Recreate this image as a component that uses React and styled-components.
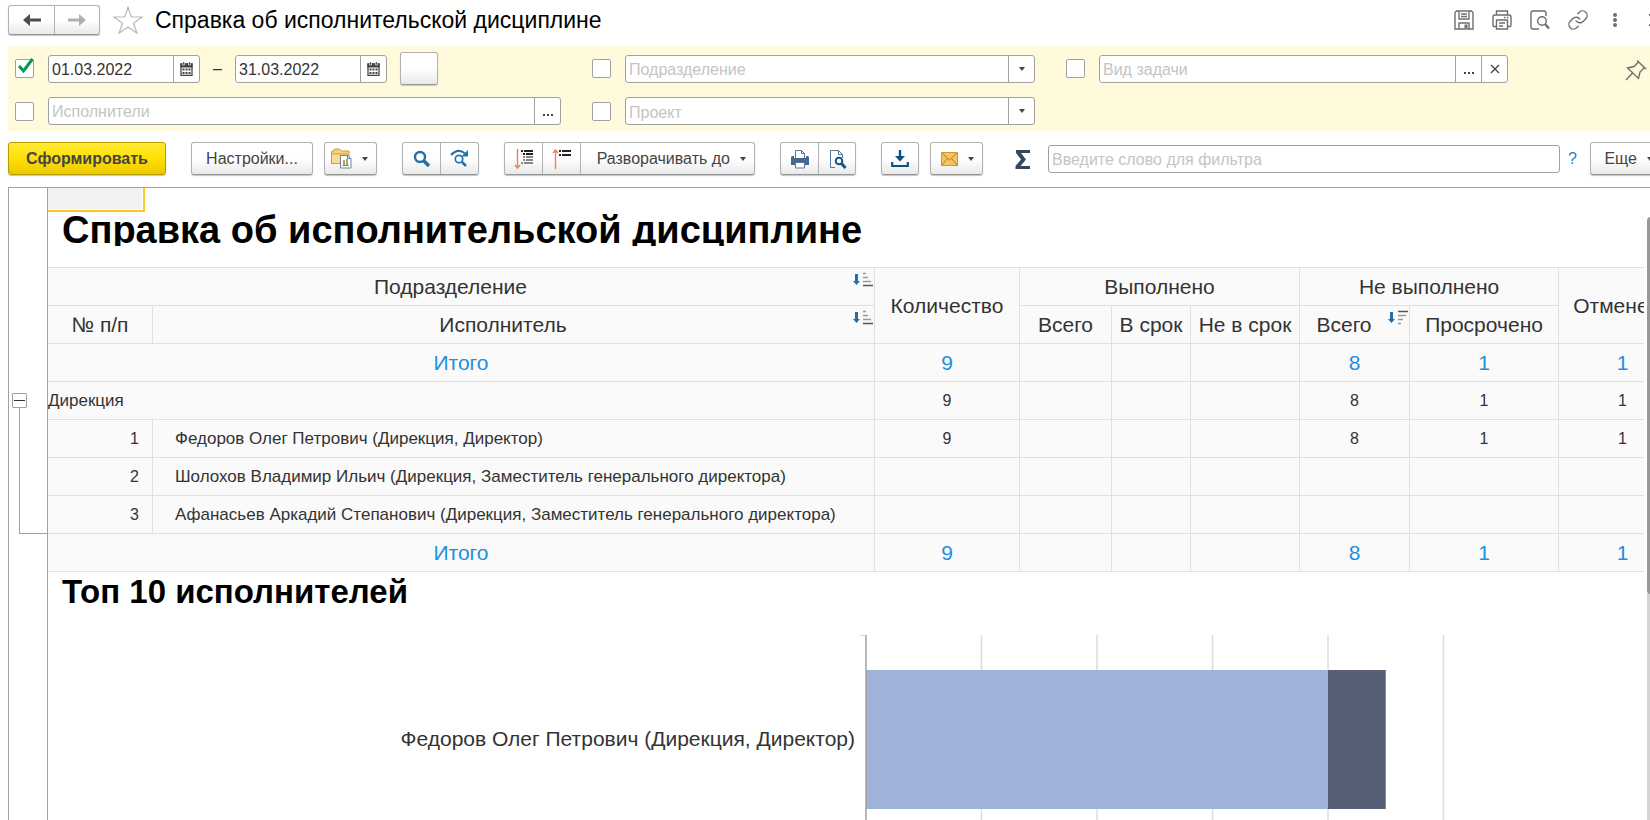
import React, { useState } from "react";
import styled, { createGlobalStyle } from "styled-components";
import { Link } from "lucide-react";

const GlobalStyle = createGlobalStyle`
  * {
    box-sizing: border-box;
  }
  body {
    margin: 0;
    background: #fff;
    overflow: hidden;
  }
  body, button, input, select {
    font-family: "Liberation Sans", Arial, sans-serif;
    font-size: 16px;
    color: #333;
  }
`;

const Viewport = styled.div`
  height: 100vh;
  overflow: hidden;
`;

// the form is a little wider than the window, its right edge is cut off
const Form = styled.div`
  display: flex;
  flex-direction: column;
  height: 100%;
  margin-right: -12px;
  padding-left: 8px;
`;

/* ---------- title bar ---------- */

const TitleBar = styled.header`
  display: flex;
  align-items: center;
  flex: none;
  height: 46px;
  padding-bottom: 6px;
`;

const Title = styled.h1`
  flex: 1;
  margin: 0;
  font-size: 23px;
  font-weight: normal;
  line-height: 28px;
  color: #000;
`;

const IconButton = styled.button`
  display: flex;
  align-items: center;
  justify-content: ${(p) => p.$align || "center"};
  flex: none;
  width: ${(p) => p.$width || 38}px;
  height: 28px;
  padding: 0;
  border: 0;
  background: none;
  cursor: pointer;
`;

const StarButton = styled(IconButton)`
  margin: 0 8px 0 9px;
`;

/* ---------- buttons ---------- */

const Group = styled.div`
  display: flex;
  flex: none;
  height: ${(p) => p.$height || 33}px;
  margin-right: ${(p) => p.$gap || 0}px;
  border: 1px solid #b2b2b2;
  border-bottom-color: #969696;
  border-radius: 3px;
  background: linear-gradient(#fff 50%, #e9e9e9);
  box-shadow: 0 1px 1px #c4c4c4;
`;

const Button = styled.button`
  display: flex;
  align-items: center;
  justify-content: center;
  gap: 10px;
  width: ${(p) => p.$width}px;
  padding: 0;
  border: 0;
  background: none;
  color: #444;
  white-space: nowrap;
  cursor: pointer;

  & + & {
    border-left: 1px solid #b2b2b2;
  }
`;

const MenuButton = styled(Button)`
  justify-content: flex-end;
  padding-right: 8px;
`;

const RunButton = styled(Button)`
  flex: none;
  height: 33px;
  margin-right: 25px;
  border: 1px solid #b59d00;
  border-radius: 3px;
  background: linear-gradient(#ffea38, #ffe000 50%, #ebc800);
  box-shadow: 0 1px 1px #c4c4c4;
  font-weight: bold;
`;

/* ---------- filters ---------- */

const FilterPanel = styled.section`
  display: flex;
  flex: none;
  height: 85px;
  padding: 6px 15px 0 7px;
  background: #fffadb;
`;

const FilterGrid = styled.div`
  display: grid;
  flex: 1;
  grid-template-columns: 546fr 443fr 442fr;
  grid-template-rows: 33px 28px;
  gap: 12px 31px;
  align-content: start;
`;

const FilterCell = styled.div`
  display: flex;
  align-items: center;
  min-width: 0;
`;

const CheckLabel = styled.label`
  position: relative;
  flex: none;
  width: 19px;
  height: 19px;
  margin-right: 14px;

  svg {
    position: absolute;
    left: 2px;
    top: -2px;
    pointer-events: none;
  }
`;

const CheckBox = styled.input`
  display: block;
  appearance: none;
  width: 19px;
  height: 19px;
  margin: 0;
  border: 1px solid #a0a0a0;
  border-radius: 2px;
  background: #fff;
`;

const Field = styled.div`
  display: flex;
  flex: ${(p) => (p.$width ? "none" : 1)};
  width: ${(p) => (p.$width ? `${p.$width}px` : "auto")};
  min-width: 0;
  height: 28px;
  border: 1px solid #a0a0a0;
  border-radius: 3px;
  background: #fff;
  overflow: hidden;
`;

const TextInput = styled.input`
  flex: 1;
  min-width: 0;
  padding: 2px 3px 0;
  border: 0;
  outline: 0;
  background: none;

  &::placeholder {
    color: #c4c4c4;
  }
`;

const FieldButton = styled.button`
  display: flex;
  align-items: center;
  justify-content: center;
  flex: none;
  width: 26px;
  padding: 0;
  border: 0;
  border-left: 1px solid #a0a0a0;
  background: none;
`;

const SelectField = styled(Field)`
  display: grid;

  > * {
    grid-area: 1 / 1;
  }
`;

const Select = styled.select`
  appearance: none;
  padding: 2px 30px 0 3px;
  border: 0;
  outline: 0;
  background: none;
  color: #c4c4c4;
`;

const SelectArrow = styled.span`
  display: flex;
  align-items: center;
  justify-content: center;
  justify-self: end;
  width: 26px;
  border-left: 1px solid #a0a0a0;
  pointer-events: none;
`;

const Dash = styled.span`
  width: 35px;
  text-align: center;
`;

const PeriodGroup = styled(Group)`
  margin-left: 13px;
`;

const PinButton = styled(IconButton)`
  margin-left: 117px;
  margin-top: 4px;
`;

/* ---------- toolbar ---------- */

const Toolbar = styled.div`
  display: flex;
  align-items: flex-start;
  flex: none;
  height: 56px;
  padding-top: 11px;
`;

const FilterField = styled(Field)`
  align-self: flex-start;
  margin-top: 3px;
`;

const HelpLink = styled.a`
  width: 30px;
  padding-left: 8px;
  line-height: 33px;
  color: #1a7fc4;
  text-decoration: none;
`;

const Sum = styled.div`
  display: flex;
  justify-content: flex-end;
  width: 65px;
  padding: 8px 17px 0 0;
`;

/* ---------- report ---------- */

const Report = styled.main`
  display: flex;
  flex: 1;
  min-height: 0;
  border-top: 1px solid #a0a0a0;
  border-left: 1px solid #a0a0a0;
`;

const Gutter = styled.aside`
  flex: none;
  width: 39px;
  padding: 205px 0 0 3px;
  border-right: 1px solid #a0a0a0;
`;

const Collapse = styled.button`
  display: flex;
  align-items: center;
  justify-content: center;
  width: 15px;
  height: 15px;
  padding: 0;
  border: 1px solid #a0a0a0;
  border-radius: 1px;
  background: #fff;
`;

const Bracket = styled.div`
  height: 126px;
  margin-left: 7px;
  border-left: 1px solid #a0a0a0;
  border-bottom: 1px solid #a0a0a0;
`;

const Sheet = styled.div`
  flex: 1;
  min-width: 0;
  overflow: hidden;
`;

const ActiveCell = styled.div`
  width: 97px;
  height: 24px;
  border: solid #fac81e;
  border-width: 0 2px 2px 0;
  background: #f2f2f2;
  box-shadow: inset -1px -1px #fff;
`;

const ReportTitle = styled.h2`
  height: 34px;
  margin: 0 0 21px;
  padding-left: 14px;
  font-size: 38px;
  line-height: 36px;
  color: #000;
  white-space: nowrap;
  overflow: hidden;
`;

const ChartTitle = styled.h2`
  margin: 0;
  padding-left: 14px;
  font-size: 33px;
  line-height: 40px;
  color: #000;
`;

const Table = styled.table`
  table-layout: fixed;
  width: 1639px;
  border-collapse: separate;
  border-spacing: 0;
  border-top: 1px solid #e0e0e0;
  background: #fafafa;
`;

const Cell = styled.td`
  height: 38px;
  padding: 0;
  border: solid #e0e0e0;
  border-width: 0 1px 1px 0;
  text-align: center;
`;

const HeadCell = styled(Cell).attrs({ as: "th" })`
  font-size: 21px;
  font-weight: normal;
  white-space: nowrap;
`;

const TotalCell = styled(Cell)`
  font-size: 21px;
  color: #1e90e0;
`;

const NumberCell = styled(Cell)`
  padding-right: 13px;
  text-align: right;
`;

const NameCell = styled(Cell)`
  padding-left: 22px;
  font-size: 17px;
  text-align: left;
`;

const GroupCell = styled(Cell)`
  font-size: 17px;
  text-align: left;
`;

const SortedHead = styled.div`
  display: flex;
  height: 37px;
  line-height: 37px;

  span {
    flex: 1;
  }
  svg {
    flex: none;
    margin: 4px 1px 0 0;
  }
`;

const Chart = styled.div`
  display: flex;
  padding-top: 23px;
`;

const ChartLabel = styled.div`
  flex: none;
  width: 811px;
  padding: 92px 4px 0 0;
  font-size: 21px;
  line-height: 24px;
  text-align: right;
`;

const ScrollTrack = styled.div`
  flex: none;
  width: 15px;
  margin: 29px 0 0 3px;
  background: #d4d4d4;
  border-radius: 7px 7px 0 0;
`;

const ScrollThumb = styled.div`
  height: 377px;
  background: #989898;
  border-radius: 4px;
`;

/* ---------- icons ---------- */

const Line = ({ size = 20, children, color = "#6e6e6e" }) => (
  <svg
    width={size}
    height={size}
    viewBox={`0 0 ${size} ${size}`}
    fill="none"
    stroke={color}
    strokeWidth="1.4"
    aria-hidden="true"
  >
    {children}
  </svg>
);

const Arrow = ({ back }) => (
  <svg width="18" height="12" viewBox="0 0 18 12" aria-hidden="true">
    <path
      d={back ? "M0 6 7 0v4.500h11v3H7V12z" : "M18 6 11 0v4.500H0v3h11V12z"}
      fill={back ? "#4d4d4d" : "#b0b0b0"}
    />
  </svg>
);

const Caret = () => (
  <svg width="6" height="4" viewBox="0 0 6 4" aria-hidden="true">
    <path d="M0 0h6L3 4z" fill="#444" />
  </svg>
);

const Star = () => (
  <svg width="30" height="28" viewBox="0 0 30 28" fill="none" aria-hidden="true">
    <path
      d="m15 1 3.200 10H29l-8.500 6.200L24 27.200l-9-6.200-9 6.200 3.500-10L1 11h10.800z"
      stroke="#b4bac0"
      strokeWidth="1.200"
    />
  </svg>
);

const Calendar = () => (
  <svg width="13" height="14" viewBox="0 0 13 14" aria-hidden="true">
    <path d="M1 2h11v11.300H1z" fill="#fff" stroke="#444" strokeWidth="1.300" />
    <path d="M.4 1.500h12.200V5.500H.4z" fill="#444" />
    <path d="M2.500 0h2v3h-2zM8.500 0h2v3h-2z" fill="#444" stroke="#fff" strokeWidth=".6" />
    <path d="M2.500 6.500h2v2h-2zM5.500 6.500h2v2h-2zM8.500 6.500h2v2h-2zM2.500 10h2v2h-2zM5.500 10h2v2h-2zM8.500 10h2v2h-2z" fill="#444" />
  </svg>
);

const Tick = () => (
  <svg width="18" height="17" viewBox="0 0 18 17" fill="none" aria-hidden="true">
    <path d="m2 9 4.500 5L15.500 2" stroke="#009c4d" strokeWidth="3" />
  </svg>
);

const Save = () => (
  <Line>
    <path d="M1 2.500 2.500 1h15L19 2.500V19H1zM5 1v8h10V1M7 4h6M7 6.500h6M5 19v-6h10v6" />
    <path d="M10.500 14.500h3V18h-3z" fill="#6e6e6e" stroke="none" />
  </Line>
);

const Print = () => (
  <Line>
    <path d="M4.500 5V1h11v4M4 16.500H1.500Q1 16.500 1 15V7q0-2 2-2h14q2 0 2 2v8q0 1.500-1 1.500h-2M4.500 10h11v9h-11zM7 13h6M7 16h4M12 7.500h1.500M15 7.500h1.500" />
  </Line>
);

const Preview = () => (
  <Line>
    <path d="M9 19H3q-2 0-2-2V3q0-2 2-2h11q2 0 2 2v3" />
    <circle cx="12" cy="11" r="4.300" />
    <path d="m15 14 4 4.500" strokeWidth="2.400" />
  </Line>
);

const Dots = () => (
  <svg width="6" height="16" viewBox="0 0 6 16" fill="#6e6e6e" aria-hidden="true">
    <circle cx="3" cy="3" r="2" />
    <circle cx="3" cy="8" r="2" />
    <circle cx="3" cy="13" r="2" />
  </svg>
);

const Close = ({ size = 10 }) => (
  <svg width={size} height={size} viewBox="0 0 10 10" aria-hidden="true">
    <path d="m1 1 8 8M9 1 1 9" stroke="#444" strokeWidth="1.300" />
  </svg>
);

const Ellipsis = () => (
  <svg width="12" height="14" viewBox="0 0 12 14" fill="#444" aria-hidden="true">
    <path d="M1 10h2v2H1zM5 10h2v2H5zM9 10h2v2H9z" />
  </svg>
);

const Pin = () => (
  <Line size={22}>
    <path d="m12 1.500 9 8.500M13.500 3 9 7.500 2.500 9 13.500 19.500 15 13l4.500-4.500M7.500 14 1 21" />
  </Line>
);

const Folder = () => (
  <svg width="21" height="21" viewBox="0 0 21 21" aria-hidden="true">
    <path d="M.5 15V3.500L2 3l1.500-2h5l2 2h7.500V6" fill="#f1d07e" stroke="#d29b42" />
    <path d="M.5 15.500V6H18v9.500z" fill="#f8dc92" stroke="#d29b42" />
    <path d="M9.500 7.500h7l3.500 3V20H9.500z" fill="#fff" stroke="#718394" />
    <path d="M16.500 7.500v3H20" fill="none" stroke="#718394" />
    <path d="M13 12v5" stroke="#e4572e" strokeWidth="1.500" />
    <path d="M16 11v6" stroke="#3da35d" strokeWidth="1.500" />
    <path d="M11.500 17.500H18" stroke="#718394" />
  </svg>
);

const Search = () => (
  <svg width="18" height="18" viewBox="0 0 18 18" fill="none" stroke="#2571a8" aria-hidden="true">
    <circle cx="7" cy="7" r="5" strokeWidth="2.400" />
    <path d="m11 11 5 5" strokeWidth="3.500" />
  </svg>
);

const SearchNext = () => (
  <svg width="19" height="19" viewBox="0 0 19 19" fill="none" stroke="#2571a8" aria-hidden="true">
    <circle cx="9" cy="10" r="3.700" strokeWidth="1.700" />
    <path d="m12 13 4 4" strokeWidth="2.500" />
    <path d="M1 6q7-7.500 14-1.500" strokeWidth="2" />
    <path d="M18 1v6.500h-6.500z" fill="#2571a8" stroke="none" />
  </svg>
);

const Expand = () => (
  <svg width="20" height="20" viewBox="0 0 20 20" fill="none" aria-hidden="true">
    <path d="M3.500 0v19M1 16l2.500 3L6 16" stroke="#f08050" strokeWidth="1.400" />
    <path d="M7 2h2M10 2h9M9 5h2M12 5h7" stroke="#222" strokeWidth="2" />
    <path d="M9 8h2M12 8h7M9 11h2M12 11h7M7 14h2M10 14h9" stroke="#888" strokeWidth="2" />
  </svg>
);

const CollapseAll = () => (
  <svg width="20" height="20" viewBox="0 0 20 20" fill="none" aria-hidden="true">
    <path d="M3.500 20V1M1 4l2.500-3L6 4" stroke="#f08050" strokeWidth="1.400" />
    <path d="M7 2h2M10 2h9M7 6h2M10 6h9" stroke="#222" strokeWidth="2" />
  </svg>
);

const PrintColor = () => (
  <svg width="20" height="20" viewBox="0 0 20 20" aria-hidden="true">
    <path d="M5.500 9V1.500h6l3 3V9" fill="#fff" stroke="#58779c" />
    <path d="M11.500 1.500v3h3" fill="none" stroke="#58779c" />
    <path d="M1 8.500q0-1.500 1.500-1.500H4v2h12V7h1.500Q19 7 19 8.500V16H1z" fill="#44688f" />
    <path d="M5.500 13.500h9V19h-9z" fill="#fff" stroke="#58779c" />
  </svg>
);

const PreviewColor = () => (
  <svg width="19" height="20" viewBox="0 0 19 20" fill="none" aria-hidden="true">
    <path d="M7 18.500H2.500v-17h8l4 4V9M10.500 1.500v4h4" stroke="#58779c" />
    <circle cx="11" cy="12" r="3.300" stroke="#15557f" strokeWidth="2" />
    <path d="m13.500 14.500 4 4.500" stroke="#15557f" strokeWidth="3" />
  </svg>
);

const Download = () => (
  <svg width="18" height="18" viewBox="0 0 18 18" aria-hidden="true">
    <path d="M7.800 0h2.400v6H14l-5 5.500L4 6h3.800z" fill="#0d5280" />
    <path d="M1.200 12v4h15.600v-4" fill="none" stroke="#0d5280" strokeWidth="2.200" />
  </svg>
);

const Mail = () => (
  <svg width="17" height="14" viewBox="0 0 17 14" aria-hidden="true">
    <path d="M.5.5h16v13H.5z" fill="#f2c560" stroke="#cf9434" />
    <path d="m1 1 7.500 7L16 1M1 13l5.500-6.500M16 13l-5.500-6.500" fill="none" stroke="#b9782a" />
  </svg>
);

const Sigma = () => (
  <svg width="16" height="19" viewBox="0 0 16 19" aria-hidden="true">
    <path d="M1 0h14v3H6l5 6.500L5.500 16H15v3H.5v-3L6 9.500 1 3z" fill="#34495e" />
  </svg>
);

const SortIcon = ({ desc }) => {
  const bars = [3, 5, 8, 10];
  return (
    <svg width="20" height="15" viewBox="0 0 20 15" aria-hidden="true">
      <path d="M2 2h3v7h2l-3.500 4L0 9h2z" fill="#1a70b4" />
      {(desc ? [...bars].reverse() : bars).map((w, i) => (
        <path
          key={w}
          d={`M10 ${i * 4 + 1.5}h${w}`}
          stroke={w === 10 ? "#555" : "#999"}
          strokeWidth="1.500"
        />
      ))}
    </svg>
  );
};

/* ---------- data ---------- */

const columns = [105, 722, 145, 92, 79, 109, 110, 149, 128];

const totals = ["9", "", "", "", "8", "1", "1"];

const people = [
  { name: "Федоров Олег Петрович (Дирекция, Директор)", values: totals },
  {
    name: "Шолохов Владимир Ильич (Дирекция, Заместитель генерального директора)",
    values: ["", "", "", "", "", "", ""],
  },
  {
    name: "Афанасьев Аркадий Степанович (Дирекция, Заместитель генерального директора)",
    values: ["", "", "", "", "", "", ""],
  },
];

/* ---------- parts ---------- */

const Check = ({ label, defaultChecked = false }) => {
  const [checked, setChecked] = useState(defaultChecked);

  return (
    <CheckLabel>
      <CheckBox
        type="checkbox"
        aria-label={label}
        checked={checked}
        onChange={() => setChecked(!checked)}
      />
      {checked && <Tick />}
    </CheckLabel>
  );
};

const DateField = ({ label, value }) => (
  <Field $width={152}>
    <TextInput aria-label={label} defaultValue={value} />
    <FieldButton aria-label="Календарь">
      <Calendar />
    </FieldButton>
  </Field>
);

const Combo = ({ label }) => (
  <SelectField>
    <Select aria-label={label}>
      <option>{label}</option>
    </Select>
    <SelectArrow>
      <Caret />
    </SelectArrow>
  </SelectField>
);

const TotalRow = () => (
  <tr>
    <TotalCell colSpan={2}>Итого</TotalCell>
    {totals.map((v, i) => (
      <TotalCell key={i}>{v}</TotalCell>
    ))}
  </tr>
);

const Filters = () => (
  <FilterPanel>
    <FilterGrid>
      <FilterCell>
        <Check label="Период" defaultChecked />
        <DateField label="Начало периода" value="01.03.2022" />
        <Dash>–</Dash>
        <DateField label="Конец периода" value="31.03.2022" />
        <PeriodGroup>
          <Button $width={36} aria-label="Выбрать период" />
        </PeriodGroup>
      </FilterCell>
      <FilterCell>
        <Check label="Отбор по подразделению" />
        <Combo label="Подразделение" />
      </FilterCell>
      <FilterCell>
        <Check label="Отбор по виду задачи" />
        <Field>
          <TextInput aria-label="Вид задачи" placeholder="Вид задачи" />
          <FieldButton aria-label="Выбрать">
            <Ellipsis />
          </FieldButton>
          <FieldButton aria-label="Очистить">
            <Close />
          </FieldButton>
        </Field>
      </FilterCell>
      <FilterCell>
        <Check label="Отбор по исполнителям" />
        <Field>
          <TextInput aria-label="Исполнители" placeholder="Исполнители" />
          <FieldButton aria-label="Выбрать">
            <Ellipsis />
          </FieldButton>
        </Field>
      </FilterCell>
      <FilterCell>
        <Check label="Отбор по проекту" />
        <Combo label="Проект" />
      </FilterCell>
    </FilterGrid>
    <PinButton $width={22} aria-label="Закрепить">
      <Pin />
    </PinButton>
  </FilterPanel>
);

const Commands = () => (
  <Toolbar>
    <RunButton $width={158}>Сформировать</RunButton>
    <Group $gap={11}>
      <Button $width={120}>Настройки...</Button>
    </Group>
    <Group $gap={25}>
      <MenuButton $width={51} aria-label="Варианты отчета">
        <Folder />
        <Caret />
      </MenuButton>
    </Group>
    <Group $gap={25}>
      <Button $width={37} aria-label="Найти">
        <Search />
      </Button>
      <Button $width={38} aria-label="Найти далее">
        <SearchNext />
      </Button>
    </Group>
    <Group $gap={25}>
      <Button $width={37} aria-label="Развернуть">
        <Expand />
      </Button>
      <Button $width={38} aria-label="Свернуть">
        <CollapseAll />
      </Button>
      <MenuButton $width={174}>
        Разворачивать до
        <Caret />
      </MenuButton>
    </Group>
    <Group $gap={25}>
      <Button $width={37} aria-label="Печать">
        <PrintColor />
      </Button>
      <Button $width={37} aria-label="Просмотр">
        <PreviewColor />
      </Button>
    </Group>
    <Group $gap={11}>
      <Button $width={36} aria-label="Сохранить">
        <Download />
      </Button>
    </Group>
    <Group>
      <MenuButton $width={51} aria-label="Отправить">
        <Mail />
        <Caret />
      </MenuButton>
    </Group>
    <Sum>
      <Sigma />
    </Sum>
    <FilterField>
      <TextInput
        aria-label="Введите слово для фильтра"
        placeholder="Введите слово для фильтра"
      />
    </FilterField>
    <HelpLink href="#help">?</HelpLink>
    <Group>
      <MenuButton $width={70}>
        Еще
        <Caret />
      </MenuButton>
    </Group>
  </Toolbar>
);

const ReportTable = () => (
  <Table>
    <colgroup>
      {columns.map((w, i) => (
        <col key={i} style={{ width: w }} />
      ))}
    </colgroup>
    <thead>
      <tr>
        <HeadCell colSpan={2}>
          <SortedHead>
            <span>Подразделение</span>
            <SortIcon />
          </SortedHead>
        </HeadCell>
        <HeadCell rowSpan={2}>Количество</HeadCell>
        <HeadCell colSpan={3}>Выполнено</HeadCell>
        <HeadCell colSpan={2}>Не выполнено</HeadCell>
        <HeadCell rowSpan={2}>Отменено</HeadCell>
      </tr>
      <tr>
        <HeadCell>№ п/п</HeadCell>
        <HeadCell>
          <SortedHead>
            <span>Исполнитель</span>
            <SortIcon />
          </SortedHead>
        </HeadCell>
        <HeadCell>Всего</HeadCell>
        <HeadCell>В срок</HeadCell>
        <HeadCell>Не в срок</HeadCell>
        <HeadCell>
          <SortedHead>
            <span>Всего</span>
            <SortIcon desc />
          </SortedHead>
        </HeadCell>
        <HeadCell>Просрочено</HeadCell>
      </tr>
    </thead>
    <tbody>
      <TotalRow />
      <tr>
        <GroupCell colSpan={2}>Дирекция</GroupCell>
        {totals.map((v, i) => (
          <Cell key={i}>{v}</Cell>
        ))}
      </tr>
      {people.map((person, n) => (
        <tr key={person.name}>
          <NumberCell>{n + 1}</NumberCell>
          <NameCell>{person.name}</NameCell>
          {person.values.map((v, i) => (
            <Cell key={i}>{v}</Cell>
          ))}
        </tr>
      ))}
      <TotalRow />
    </tbody>
  </Table>
);

const TopChart = () => {
  // 7px of tick room on the left, then 115.5px per two tasks
  const x = (tasks) => 7 + tasks * 57.75;

  return (
    <Chart>
      <ChartLabel>Федоров Олег Петрович (Дирекция, Директор)</ChartLabel>
      <svg width="780" height="190" viewBox="0 0 780 190" role="img" aria-label="Топ 10 исполнителей">
        {[2, 4, 6, 8, 10].map((t) => (
          <path key={t} d={`M${x(t)} 0v190`} stroke="#dcdcdc" strokeWidth="1.500" />
        ))}
        <path d="M1 .5h6" stroke="#dcdcdc" />
        <rect x={x(0)} y="35" width={x(8) - x(0)} height="139" fill="#a0b1da" />
        <rect x={x(8)} y="35" width={x(9) - x(8)} height="139" fill="#565f76" />
        <path d="M7 0v190" stroke="#a0a0a0" strokeWidth="1.500" />
      </svg>
    </Chart>
  );
};

const App = () => (
  <Viewport>
    <GlobalStyle />
    <Form>
      <TitleBar>
        <Group $height={30}>
          <Button $width={45} aria-label="Назад">
            <Arrow back />
          </Button>
          <Button $width={45} aria-label="Вперед">
            <Arrow />
          </Button>
        </Group>
        <StarButton aria-label="В избранное">
          <Star />
        </StarButton>
        <Title>Справка об исполнительской дисциплине</Title>
        <IconButton aria-label="Сохранить">
          <Save />
        </IconButton>
        <IconButton aria-label="Печать">
          <Print />
        </IconButton>
        <IconButton aria-label="Просмотр">
          <Preview />
        </IconButton>
        <IconButton aria-label="Ссылка">
          <Link size={22} color="#6e6e6e" strokeWidth={1.5} />
        </IconButton>
        <IconButton $width={36} aria-label="Еще">
          <Dots />
        </IconButton>
        <IconButton $width={29} $align="flex-end" aria-label="Закрыть">
          <Close size={14} />
        </IconButton>
      </TitleBar>
      <Filters />
      <Commands />
      <Report>
        <Gutter>
          <Collapse aria-label="Свернуть группу">
            <svg width="11" height="1" viewBox="0 0 11 1" aria-hidden="true">
              <path d="M0 .5h11" stroke="#333" />
            </svg>
          </Collapse>
          <Bracket />
        </Gutter>
        <Sheet>
          <ActiveCell />
          <ReportTitle>Справка об исполнительской дисциплине</ReportTitle>
          <ReportTable />
          <ChartTitle>Топ 10 исполнителей</ChartTitle>
          <TopChart />
        </Sheet>
        <ScrollTrack>
          <ScrollThumb />
        </ScrollTrack>
      </Report>
    </Form>
  </Viewport>
);

export default App;
